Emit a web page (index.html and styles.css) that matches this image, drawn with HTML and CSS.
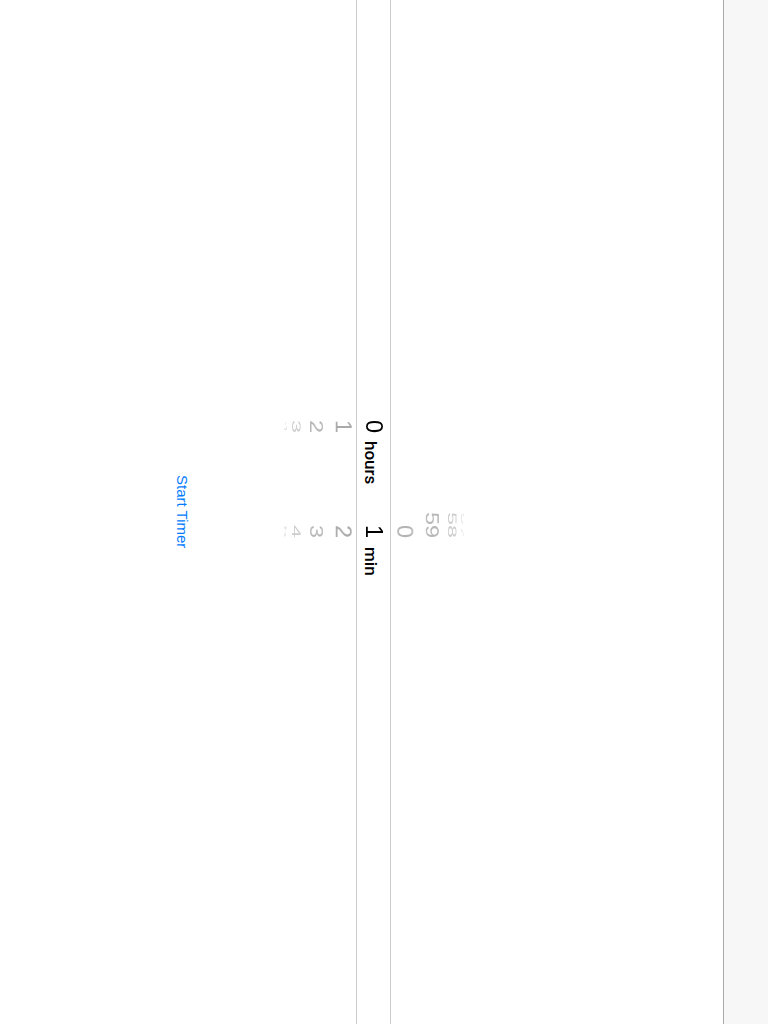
FILE: index.html
```html
<!DOCTYPE html>
<html lang="en">
<head>
<meta charset="utf-8">
<title>Timer</title>
<link rel="stylesheet" href="styles.css">
</head>
<body>
<div class="stage">
  <header class="navbar"></header>
  <main class="content">
    <div class="picker">
      <div class="band"></div>
      <div class="cols">
        <div class="col col-hours">
          <div class="wheel">
            <span class="item sel">0</span>
            <span class="item b1">1</span>
            <span class="item b2">2</span>
            <span class="item b3">3</span>
            <span class="item b4">4</span>
          </div>
          <div class="unit unit-hours">hours</div>
        </div>
        <div class="col col-min">
          <div class="wheel">
            <span class="item a4">57</span>
            <span class="item a3">58</span>
            <span class="item a2">59</span>
            <span class="item a1">0</span>
            <span class="item sel">1</span>
            <span class="item b1">2</span>
            <span class="item b2">3</span>
            <span class="item b3">4</span>
            <span class="item b4">5</span>
          </div>
          <div class="unit unit-min">min</div>
        </div>
      </div>
    </div>
    <div class="actions">
      <a class="start" href="#">Start Timer</a>
    </div>
  </main>
</div>
</body>
</html>
```

FILE: styles.css
```css
html, body {
  margin: 0;
  padding: 0;
  background: #ffffff;
}

.stage {
  width: 768px;
  height: 1024px;
  overflow: hidden;
  writing-mode: vertical-rl;
  text-orientation: sideways;
  background: #ffffff;
  font-family: "Liberation Sans", Arial, sans-serif;
  color: #000;
  display: flex;
  flex-direction: column;
}

.navbar {
  block-size: 44px;
  flex: none;
  background: #f7f7f7;
  border-block-end: 1px solid #a9a9a9;
}

.content {
  flex: 1;
  display: flex;
  flex-direction: column;
}

.picker {
  margin-block-start: 241px;
  block-size: 217px;
  display: grid;
}

.band,
.cols {
  grid-area: 1 / 1;
}

.band {
  align-self: center;
  block-size: 35px;
  box-sizing: border-box;
  border-block-start: 1px solid #cbcbcb;
  border-block-end: 1px solid #cbcbcb;
}

.cols {
  display: flex;
  padding-inline-start: 383px;
}

.col {
  display: flex;
  align-items: center;
}

.wheel {
  inline-size: 50px;
  block-size: 217px;
  display: grid;
  align-items: center;
}

.item {
  grid-area: 1 / 1;
  block-size: 32px;
  line-height: 32px;
  font-size: 23.5px;
  text-align: end;
  color: #a8a8a8;
  backface-visibility: hidden;
}

.item.sel { color: #000; }
.item.b1 { transform: rotateY(-20deg) translateZ(90px); color: #a9a9a9; }
.item.b2 { transform: rotateY(-40deg) translateZ(90px); color: #b7b7b7; }
.item.b3 { transform: rotateY(-60deg) translateZ(90px); color: #cdcdcd; }
.item.b4 { transform: rotateY(-80deg) translateZ(90px); color: #e8e8e8; }
.item.a1 { transform: rotateY(20deg) translateZ(90px); color: #b3b3b3; }
.item.a2 { transform: rotateY(40deg) translateZ(90px); color: #b7b7b7; }
.item.a3 { transform: rotateY(60deg) translateZ(90px); color: #cdcdcd; }
.item.a4 { transform: rotateY(80deg) translateZ(90px); color: #e8e8e8; }

.unit {
  font-family: Roboto, "Liberation Sans", Arial, sans-serif;
  font-weight: 500;
  font-size: 17px;
  line-height: 32px;
  padding-block-start: 5px;
  color: #000;
}

.unit-hours {
  margin-inline-start: 8px;
  inline-size: 47px;
}

.unit-min {
  margin-inline-start: 9px;
}

.actions {
  margin-block-start: 74px;
  display: flex;
  justify-content: center;
}

.start {
  font-family: "Liberation Sans", Arial, sans-serif;
  font-size: 15px;
  line-height: 18px;
  color: #007aff;
  text-decoration: none;
}
```
